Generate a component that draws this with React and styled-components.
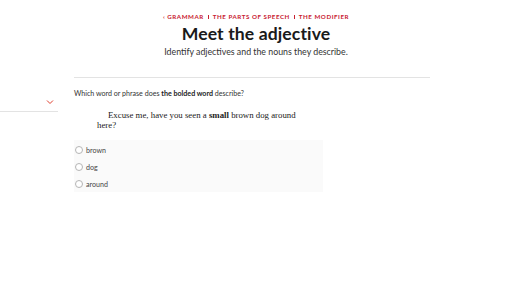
import React from "react";
import styled, { createGlobalStyle } from "styled-components";

const Global = createGlobalStyle`
  html, body { margin: 0; padding: 0; background: #fff; }
  body { font-family: "Lato", "Open Sans", sans-serif; color: #222; }
`;

const Page = styled.div`
  width: 512px;
  height: 288px;
  overflow: hidden;
`;

const Header = styled.header`
  display: flex;
  flex-direction: column;
  align-items: center;
  padding-top: 13px;
`;

const Crumbs = styled.nav`
  font-size: 6.2px;
  font-weight: 700;
  letter-spacing: 0.55px;
  color: #c8202f;
  text-transform: uppercase;
  line-height: 8px;
  display: flex;
  gap: 4px;
  align-items: center;
`;

const Sep = styled.span`
  display: inline-block;
  width: 0.8px;
  height: 4.5px;
  background: #c8202f;
`;

const Title = styled.h1`
  margin: 2px 0 0;
  font-size: 17.6px;
  font-weight: 700;
  line-height: 21px;
  color: #1a1a1a;
  letter-spacing: 0.1px;
`;

const Subtitle = styled.p`
  margin: 2px 0 0;
  font-size: 8.8px;
  line-height: 11px;
  color: #333;
`;

const Body = styled.div`
  display: flex;
  margin-top: 20px;
`;

const Sidebar = styled.aside`
  width: 58px;
  height: 35px;
  border-bottom: 1px solid #e3e3e3;
  display: flex;
  justify-content: flex-end;
  align-items: flex-start;
  padding-top: 22px;
  box-sizing: border-box;
  flex-shrink: 0;
`;

const Chevron = styled.svg`
  width: 8px;
  height: 6px;
  margin-right: 4px;
`;

const Content = styled.section`
  width: 356px;
  margin-left: 16px;
  border-top: 1px solid #e3e3e3;
`;

const Question = styled.p`
  margin: 12px 0 0;
  font-size: 7.1px;
  line-height: 8px;
  color: #333;
  b { font-weight: 700; color: #222; }
`;

const Sentence = styled.p`
  margin: 12px 0 0 23px;
  width: 212px;
  font-family: "Liberation Serif", "Times New Roman", serif;
  font-size: 8.8px;
  line-height: 10px;
  color: #222;
  text-indent: 11px;
  b { font-weight: 700; }
`;

const Options = styled.div`
  margin-top: 10px;
  width: 249px;
  height: 52px;
  background: #fafafa;
  display: flex;
  flex-direction: column;
  padding-top: 5px;
  box-sizing: border-box;
  gap: 7px;
`;

const Option = styled.label`
  display: flex;
  align-items: center;
  gap: 3px;
  height: 10px;
  font-size: 7.1px;
  color: #444;
  padding-left: 1px;
`;

const Radio = styled.span`
  width: 6px;
  height: 6px;
  border-radius: 50%;
  border: 0.8px solid #b5b5b5;
  background: #fff;
  flex-shrink: 0;
`;

export default function App() {
  return (
    <Page>
      <Global />
      <Header>
        <Crumbs>
          <span>‹ Grammar</span>
          <Sep />
          <span>The Parts of Speech</span>
          <Sep />
          <span>The Modifier</span>
        </Crumbs>
        <Title>Meet the adjective</Title>
        <Subtitle>Identify adjectives and the nouns they describe.</Subtitle>
      </Header>
      <Body>
        <Sidebar>
          <Chevron viewBox="0 0 8 6">
            <path d="M1 1.5 L4 4.5 L7 1.5" fill="none" stroke="#e0402f" strokeWidth="1" />
          </Chevron>
        </Sidebar>
        <Content>
          <Question>
            Which word or phrase does <b>the bolded word</b> describe?
          </Question>
          <Sentence>
            Excuse me, have you seen a <b>small</b> brown dog around here?
          </Sentence>
          <Options>
            {["brown", "dog", "around"].map((o) => (
              <Option key={o}>
                <Radio />
                {o}
              </Option>
            ))}
          </Options>
        </Content>
      </Body>
    </Page>
  );
}
